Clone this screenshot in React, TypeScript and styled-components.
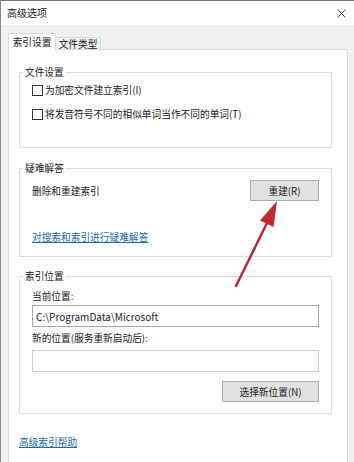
import styled, { createGlobalStyle } from "styled-components";

const GlobalStyle = createGlobalStyle`
  html, body { margin: 0; padding: 0; background: #f0f0f0; }
  body { font-family: "Noto Sans CJK SC", "Noto Sans", sans-serif; }
`;

const Window = styled.div`
  position: relative;
  width: 354px;
  height: 462px;
  overflow: hidden;
  box-sizing: border-box;
  border-left: 1px solid #8a8a8a;
  background: #f0f0f0;
  font-family: "Noto Sans CJK SC", "Noto Sans", sans-serif;
  font-size: 9.7px;
  color: #1a1a1a;
  display: flex;
  flex-direction: column;
`;

const TitleBar = styled.div`
  flex: none;
  height: 25px;
  box-sizing: border-box;
  border-top: 1px solid #6e6e6e;
  background: #fff;
  display: flex;
  align-items: center;
  justify-content: space-between;
  padding: 0 8px 0 6px;
`;

const Title = styled.span`
  font-size: 10px;
  line-height: 14px;
  color: #222;
`;

const Body = styled.div`
  flex: 1;
  display: flex;
  flex-direction: column;
  padding: 8px 6px 0 7px;
`;

const TabStrip = styled.div`
  display: flex;
  align-items: flex-end;
  height: 17px;
  margin-bottom: -1px;
  position: relative;
  z-index: 1;
`;

const Tab = styled.div<{ $active?: boolean }>`
  box-sizing: border-box;
  display: flex;
  align-items: center;
  justify-content: center;
  border: 1px solid #d9d9d9;
  border-bottom: ${(p) => (p.$active ? "none" : "1px solid #d9d9d9")};
  border-left: ${(p) => (p.$active ? "1px solid #d9d9d9" : "none")};
  background: ${(p) => (p.$active ? "#fff" : "#f0f0f0")};
  width: ${(p) => (p.$active ? "48px" : "45px")};
  height: ${(p) => (p.$active ? "17px" : "13px")};
  padding-top: ${(p) => (p.$active ? "0" : "1px")};
  line-height: 12px;
  color: #1a1a1a;
`;

const Panel = styled.div`
  flex: 1;
  background: #fff;
  border: 1px solid #d9d9d9;
  border-bottom: none;
  padding: 15px 15px 0 10px;
  display: flex;
  flex-direction: column;
`;

const Group = styled.fieldset<{ $gap?: number; $pb: number }>`
  margin: ${(p) => p.$gap ?? 0}px 0 0;
  padding: 0 12px ${(p) => p.$pb}px 12px;
  border: 1px solid #dcdcdc;
  min-width: 0;
  display: flex;
  flex-direction: column;
`;

const Legend = styled.legend`
  padding: 0 2px;
  margin-left: -9px;
  line-height: 14px;
  color: #1a1a1a;
`;

const CheckRow = styled.label<{ $top: number }>`
  display: flex;
  align-items: center;
  gap: 2px;
  height: 16px;
  margin-top: ${(p) => p.$top}px;
  line-height: 16px;
`;

const Box = styled.span`
  width: 11px;
  height: 11px;
  box-sizing: border-box;
  border: 1px solid #333;
  background: #fff;
  flex: none;
`;

const Row = styled.div<{ $top: number }>`
  display: flex;
  align-items: center;
  justify-content: space-between;
  margin-top: ${(p) => p.$top}px;
`;

const Text = styled.div<{ $top?: number }>`
  line-height: 14px;
  margin-top: ${(p) => p.$top ?? 0}px;
`;

const Button = styled.button<{ $w: number; $top?: number }>`
  width: ${(p) => p.$w}px;
  height: 21px;
  margin-top: ${(p) => p.$top ?? 0}px;
  align-self: flex-end;
  box-sizing: border-box;
  border: 1px solid #adadad;
  background: #e1e1e1;
  font-family: inherit;
  font-size: 9.7px;
  color: #1a1a1a;
  padding: 0;
`;

const Link = styled.a<{ $top: number }>`
  align-self: flex-start;
  margin-top: ${(p) => p.$top}px;
  line-height: 14px;
  color: #2368ad;
  text-decoration: underline;
  text-underline-offset: 1px;
  cursor: pointer;
`;

const Input = styled.div<{ $top: number; $border: string }>`
  height: 22px;
  box-sizing: border-box;
  margin-top: ${(p) => p.$top}px;
  border: 1px solid ${(p) => p.$border};
  background: #fff;
  padding-left: 3px;
  display: flex;
  align-items: center;
  font-size: 10px;
  color: #222;
`;

const Arrow = styled.svg`
  position: absolute;
  left: 0;
  top: 0;
  pointer-events: none;
`;

export default function App() {
  return (
    <>
      <GlobalStyle />
      <Window>
        <TitleBar>
          <Title>高级选项</Title>
          <svg width="9" height="9" viewBox="0 0 9 9">
            <path d="M0.5 0.5 L8.5 8.5 M8.5 0.5 L0.5 8.5" stroke="#333" strokeWidth="0.9" />
          </svg>
        </TitleBar>
        <Body>
          <TabStrip>
            <Tab $active>索引设置</Tab>
            <Tab>文件类型</Tab>
          </TabStrip>
          <Panel>
            <Group $pb={25}>
              <Legend>文件设置</Legend>
              <CheckRow $top={3}>
                <Box />
                为加密文件建立索引(I)
              </CheckRow>
              <CheckRow $top={8}>
                <Box />
                将发音符号不同的相似单词当作不同的单词(T)
              </CheckRow>
            </Group>

            <Group $gap={13} $pb={12}>
              <Legend>疑难解答</Legend>
              <Row $top={5}>
                <Text>删除和重建索引</Text>
                <Button $w={69}>重建(R)</Button>
              </Row>
              <Link $top={29}>对搜索和索引进行疑难解答</Link>
            </Group>

            <Group $gap={12} $pb={11}>
              <Legend>索引位置</Legend>
              <Text $top={6}>当前位置:</Text>
              <Input $top={2} $border="#a6a6a6">
                C:\ProgramData\Microsoft
              </Input>
              <Text $top={4}>新的位置(服务重新启动后):</Text>
              <Input $top={5} $border="#cfcfcf" />
              <Button $w={97} $top={9}>
                选择新位置(N)
              </Button>
            </Group>

            <Link $top={21}>高级索引帮助</Link>
          </Panel>
        </Body>
        <Arrow width="354" height="462" viewBox="0 0 354 462">
          <line x1="235" y1="286" x2="268" y2="219" stroke="#b8262b" strokeWidth="2.4" strokeLinecap="round" />
          <polygon points="276,201 272.5,227 259,220.5" fill="#c0282d" />
        </Arrow>
      </Window>
    </>
  );
}
